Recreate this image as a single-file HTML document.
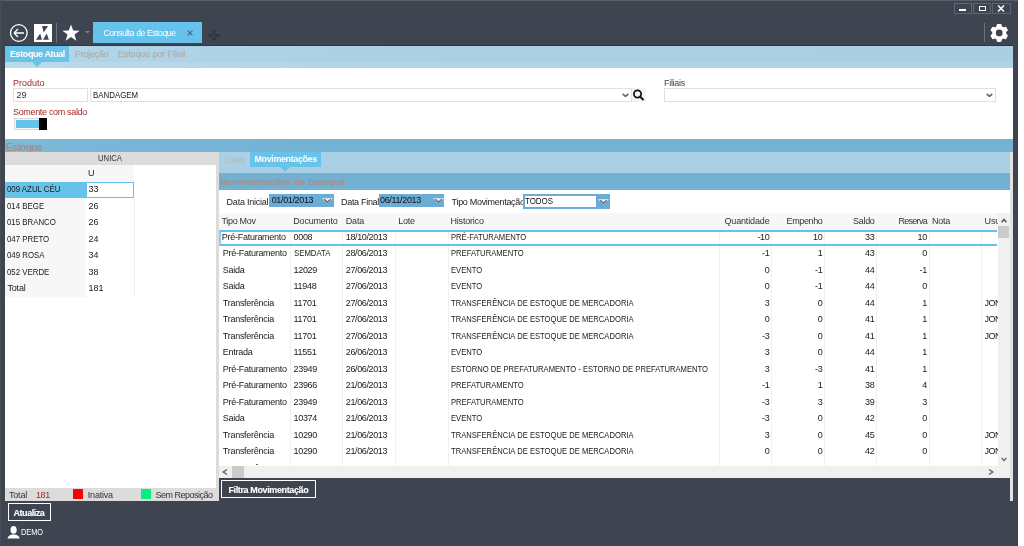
<!DOCTYPE html>
<html><head><meta charset="utf-8">
<style>
*{margin:0;padding:0;box-sizing:border-box}
html,body{width:1024px;height:546px;overflow:hidden;background:#fff;font-family:"Liberation Sans",sans-serif;font-size:9px;color:#1a1a1a}
.a{position:absolute}
.t{position:absolute;white-space:nowrap;line-height:9px}
#frame{left:0;top:0;width:1018px;height:546px;background:#3e4550}
#tabbar{left:5px;top:46px;width:1008px;height:22px;background:linear-gradient(90deg,#b2d6e8,#a9d0e4 40%,#a8cfe3)}
#content{left:5px;top:68px;width:1008px;height:71px;background:#fff}
.inp{position:absolute;border:1px solid #e0e0e0;background:#fff}
.red{color:#a52a2a}
#estbar{left:5px;top:139px;width:1008px;height:12.5px;background:linear-gradient(90deg,#80bad9,#79b5d6 12%,#74b2d4 30%,#74b2d4)}
#leftp{left:5px;top:151.5px;width:214px;height:349.5px;background:#dcdcdc}
#rightp{left:219px;top:151.5px;width:791px;height:314px;background:#fff}
#rstrip{left:1010px;top:151.5px;width:3px;height:349.5px;background:#e2e2e2}
.vl{position:absolute;top:230px;width:1px;height:235.6px;background:#f0f0f0}
.row .t{top:0}
.u{transform:scaleX(0.85);transform-origin:0 0}
.ur{transform:scaleX(0.85);transform-origin:100% 0}
</style></head><body><div id="root" style="position:absolute;left:0;top:0;width:1024px;height:546px;will-change:transform">
<div id="frame" class="a"></div>
<div class="a" style="left:0;top:0;width:1018px;height:1px;background:#5b5f66"></div>
<div class="a" style="left:0;top:0;width:1.2px;height:546px;background:#484d55"></div>

<!-- title bar icons -->
<svg class="a" style="left:8px;top:22px" width="22" height="22" viewBox="0 0 22 22">
 <circle cx="10.8" cy="11" r="8.3" fill="none" stroke="#fff" stroke-width="1.3"/>
 <path d="M6 11 H16 M6 11 L10 7 M6 11 L10 15" stroke="#fff" stroke-width="1.4" fill="none"/>
</svg>
<div class="a" style="left:34px;top:24px;width:18px;height:18px;background:#fff"></div>
<svg class="a" style="left:34px;top:24px" width="18" height="18" viewBox="0 0 18 18">
 <path d="M8.1 2 L14.1 2 L9.6 8.5 Z" fill="#3e4550"/>
 <path d="M2 15.7 L7.9 15.7 L6.2 9.4 Z" fill="#3e4550"/>
 <path d="M9.1 15.7 L14.9 15.7 L12.7 9.4 Z" fill="#3e4550"/>
</svg>
<div class="a" style="left:56px;top:23px;width:1px;height:19.5px;background:#6c727b"></div>
<svg class="a" style="left:61.5px;top:24px" width="18" height="18" viewBox="0 0 18 18">
 <path d="M9 0.5 L11.2 6.6 L17.6 6.7 L12.5 10.6 L14.3 16.8 L9 13.1 L3.7 16.8 L5.5 10.6 L0.4 6.7 L6.8 6.6 Z" fill="#fff"/>
</svg>
<svg class="a" style="left:84.5px;top:31px" width="5" height="3" viewBox="0 0 5 3"><path d="M0 0 H5 L2.5 2.5 Z" fill="#7a8089"/></svg>
<div class="a" style="left:93px;top:22.4px;width:109px;height:20.8px;background:#66c2ea"></div>
<div class="t" style="left:103.5px;top:29px;color:#fff;font-size:8.7px;letter-spacing:-0.45px">Consulta de Estoque</div>
<svg class="a" style="left:187px;top:29.8px" width="6" height="6" viewBox="0 0 6 6"><path d="M0.6 0.6 L5.4 5.4 M5.4 0.6 L0.6 5.4" stroke="#3b6580" stroke-width="1.1"/></svg>
<svg class="a" style="left:207.5px;top:30px" width="12" height="12" viewBox="0 0 12 12"><path d="M6 1.6 V9.6 M1.6 5.6 H10.4" stroke="#2d3540" stroke-width="3" stroke-linecap="round"/><path d="M6 2 V8 M2.5 5.6 H8" stroke="#3f4a57" stroke-width="0.8"/></svg>

<!-- window buttons -->
<div class="a" style="left:954px;top:3px;width:18px;height:11px;border:1px solid #56687b"></div>
<div class="a" style="left:973px;top:3px;width:18px;height:11px;border:1px solid #56687b"></div>
<div class="a" style="left:992px;top:3px;width:19px;height:11px;border:1px solid #56687b"></div>
<div class="a" style="left:959px;top:9px;width:7px;height:2px;background:#fff"></div>
<div class="a" style="left:978.5px;top:5.5px;width:7px;height:5px;border:1.5px solid #fff"></div>
<svg class="a" style="left:997px;top:5px" width="8" height="7" viewBox="0 0 8 7"><path d="M1 0.5 L7 6.5 M7 0.5 L1 6.5" stroke="#fff" stroke-width="1.5"/></svg>
<div class="a" style="left:984px;top:23px;width:1px;height:19px;background:#6c727b"></div>
<svg class="a" style="left:990px;top:24px" width="18" height="18" viewBox="0 0 18 18">
 <g fill="#fff" transform="translate(9.2 8.9)">
  <circle r="7.1"/>
  <rect x="-2.5" y="-9" width="5" height="5" rx="1.3"/>
  <rect x="-2.5" y="-9" width="5" height="5" rx="1.3" transform="rotate(60)"/>
  <rect x="-2.5" y="-9" width="5" height="5" rx="1.3" transform="rotate(120)"/>
  <rect x="-2.5" y="-9" width="5" height="5" rx="1.3" transform="rotate(180)"/>
  <rect x="-2.5" y="-9" width="5" height="5" rx="1.3" transform="rotate(240)"/>
  <rect x="-2.5" y="-9" width="5" height="5" rx="1.3" transform="rotate(300)"/>
  <circle r="3.4" fill="#3e4550"/>
 </g>
</svg>

<!-- tab bar -->
<div class="a" style="left:5px;top:45px;width:1008px;height:1.2px;background:#30363e"></div>
<div id="tabbar" class="a"></div>
<div class="a" style="left:5px;top:62px;width:1008px;height:5.6px;background:rgba(255,255,255,0.1)"></div>
<div class="a" style="left:5px;top:46px;width:64px;height:16px;background:#68c3ea"></div>
<svg class="a" style="left:32.4px;top:62px" width="10" height="5" viewBox="0 0 10 5"><path d="M0 0 H10 L5 4.9 Z" fill="#68c3ea"/></svg>
<div class="t" style="left:10px;top:50.2px;color:#fff;font-weight:bold;letter-spacing:-0.4px">Estoque Atual</div>
<div class="t" style="left:75px;top:50.2px;color:#b0b0b0;letter-spacing:-0.25px;-webkit-text-stroke:0.25px #b0b0b0">Projeção</div>
<div class="t" style="left:118px;top:50.2px;color:#b0b0b0;letter-spacing:-0.13px;-webkit-text-stroke:0.25px #b0b0b0">Estoque por Filial</div>

<!-- content -->
<div id="content" class="a"></div>
<div class="t red" style="left:13px;top:78.8px;letter-spacing:0">Produto</div>
<div class="inp" style="left:13px;top:88px;width:75px;height:14px"></div>
<div class="t" style="left:16.5px;top:91px;color:#333">29</div>
<div class="inp" style="left:90px;top:88px;width:541.5px;height:14px"></div>
<div class="t u" style="left:92.5px;top:91.3px;transform:scaleX(0.875)">BANDAGEM</div>
<svg class="a" style="left:621.8px;top:92.6px" width="7" height="4.5" viewBox="0 0 7 4.5"><path d="M0.7 0.8 L3.5 3.5 L6.3 0.8" stroke="#666" stroke-width="1.6" fill="none"/></svg>
<div class="a" style="left:631.5px;top:88px;width:14px;height:14px;background:#f4f4f4"></div>
<svg class="a" style="left:632px;top:88.8px" width="13" height="13" viewBox="0 0 13 13"><circle cx="5.5" cy="5" r="3.6" fill="none" stroke="#111" stroke-width="1.7"/><path d="M8 7.5 L11.5 11" stroke="#111" stroke-width="2"/></svg>
<div class="t" style="left:664px;top:78.8px;color:#444;letter-spacing:-0.3px">Filiais</div>
<div class="inp" style="left:663.5px;top:88px;width:332.3px;height:14px"></div>
<svg class="a" style="left:985.6px;top:92.6px" width="7" height="4.5" viewBox="0 0 7 4.5"><path d="M0.7 0.8 L3.5 3.5 L6.3 0.8" stroke="#666" stroke-width="1.6" fill="none"/></svg>
<div class="t red" style="left:13px;top:108px;letter-spacing:-0.33px">Somente com saldo</div>
<div class="a" style="left:13.8px;top:118.1px;width:33.2px;height:12.2px;background:#f4f6f7;border:1.2px solid #d9d9d9"></div>
<div class="a" style="left:15.8px;top:119.9px;width:23.6px;height:8.3px;background:#68c3ea"></div>
<div class="a" style="left:39.2px;top:118.1px;width:7.8px;height:12.2px;background:#000"></div>

<!-- estoque bar -->
<div id="estbar" class="a"></div>
<div class="a" style="left:5px;top:139px;width:100px;height:12.5px;overflow:hidden"><div class="t" style="left:0.8px;top:3.5px;color:#9c9390;font-weight:bold;font-size:10px;letter-spacing:-0.45px;-webkit-text-stroke:0.15px #9c9390">Estoque</div></div>

<!-- left panel -->
<div id="leftp" class="a"></div>
<div class="a" style="left:5px;top:165px;width:210.5px;height:322.5px;background:#fff"></div>
<div class="t u" style="left:97.5px;top:153.5px;color:#333;transform:scaleX(0.857)">UNICA</div>
<div class="a" style="left:5px;top:165px;width:129px;height:16.5px;background:#f7f7f7"></div>
<div class="t" style="left:88px;top:168.5px">U</div>
<div class="a" style="left:5px;top:181.5px;width:81px;height:16.5px;background:#68c3ea"></div>
<div class="a" style="left:86px;top:181.5px;width:48px;height:16.5px;border:1.5px solid #66c1ea;background:#fff"></div>
<div class="a" style="left:5px;top:198px;width:81px;height:99px;background:#f7f7f7"></div>
<div class="a" style="left:133.5px;top:198px;width:1px;height:98.5px;background:#f0f0f0"></div>
<div class="t" style="left:6.5px;top:185px;transform:scaleX(0.873);transform-origin:0 0">009 AZUL CÉU</div><div class="t" style="left:88.5px;top:185px">33</div>
<div class="t" style="left:6.5px;top:201.5px;transform:scaleX(0.873);transform-origin:0 0">014 BEGE</div><div class="t" style="left:88.5px;top:201.5px">26</div>
<div class="t" style="left:6.5px;top:218px;transform:scaleX(0.873);transform-origin:0 0">015 BRANCO</div><div class="t" style="left:88.5px;top:218px">26</div>
<div class="t" style="left:6.5px;top:234.5px;transform:scaleX(0.873);transform-origin:0 0">047 PRETO</div><div class="t" style="left:88.5px;top:234.5px">24</div>
<div class="t" style="left:6.5px;top:251px;transform:scaleX(0.873);transform-origin:0 0">049 ROSA</div><div class="t" style="left:88.5px;top:251px">34</div>
<div class="t" style="left:6.5px;top:267.5px;transform:scaleX(0.873);transform-origin:0 0">052 VERDE</div><div class="t" style="left:88.5px;top:267.5px">38</div>
<div class="t" style="left:7.5px;top:284px;letter-spacing:-0.2px">Total</div><div class="t" style="left:88.5px;top:284px">181</div>
<!-- status -->
<div class="t" style="left:9px;top:490.5px;color:#333;letter-spacing:-0.2px">Total</div>
<div class="t" style="left:36px;top:490.5px;color:#a52a2a;letter-spacing:-0.4px">181</div>
<div class="a" style="left:73.3px;top:489.4px;width:9.7px;height:9.7px;background:#ff0000"></div>
<div class="t" style="left:87.8px;top:490.5px;color:#333;letter-spacing:-0.2px">Inativa</div>
<div class="a" style="left:140.8px;top:489.4px;width:9.8px;height:9.7px;background:#00f080"></div>
<div class="t" style="left:155.6px;top:490.5px;color:#333;letter-spacing:-0.5px">Sem Reposição</div>

<div id="rstrip" class="a"></div>

<!-- right panel -->
<div id="rightp" class="a"></div>
<div class="a" style="left:219px;top:151.5px;width:791px;height:21.5px;background:#a9d0e4"></div>
<div class="t" style="left:224.3px;top:155.5px;color:#b5babd;letter-spacing:-0.3px">Lotes</div>
<div class="a" style="left:250.3px;top:152px;width:70.7px;height:15px;background:#68c3ea"></div>
<svg class="a" style="left:280.4px;top:167px" width="10" height="5" viewBox="0 0 10 5"><path d="M0 0 H10 L5 4.7 Z" fill="#68c3ea"/></svg>
<div class="t" style="left:254.5px;top:155px;color:#fff;font-weight:bold;letter-spacing:-0.4px">Movimentações</div>
<div class="a" style="left:219px;top:173px;width:791px;height:17.3px;background:#72b0d4"></div>
<div class="t" style="left:219.8px;top:176.5px;color:#9c9592;font-weight:bold;font-size:9.5px;letter-spacing:0px;-webkit-text-stroke:0.15px #9c9592">Movimentações de Estoque</div>

<div class="t" style="left:226.6px;top:197.7px;letter-spacing:-0.23px">Data Inicial</div>
<div class="a" style="left:269px;top:194.2px;width:64.7px;height:12.6px;background:#6aacd6"></div>
<div class="t" style="left:271.7px;top:195.5px;color:#111;letter-spacing:-0.35px">01/01/2013</div>
<svg class="a" style="left:322px;top:197.8px" width="11" height="6" viewBox="0 0 11 6"><path d="M0 0.2 L11 0.2 L5.5 5.6 Z" fill="#e9f2f7"/><path d="M2.2 1.3 L5.5 4.3 L8.8 1.3" stroke="#6a6a6a" stroke-width="1.4" fill="none"/></svg>
<div class="t" style="left:341px;top:197.7px;letter-spacing:-0.3px">Data Final</div>
<div class="a" style="left:379px;top:194.2px;width:65px;height:12.6px;background:#6aacd6"></div>
<div class="t" style="left:380px;top:195.5px;color:#111;letter-spacing:-0.35px">06/11/2013</div>
<svg class="a" style="left:432.5px;top:197.8px" width="11" height="6" viewBox="0 0 11 6"><path d="M0 0.2 L11 0.2 L5.5 5.6 Z" fill="#e9f2f7"/><path d="M2.2 1.3 L5.5 4.3 L8.8 1.3" stroke="#6a6a6a" stroke-width="1.4" fill="none"/></svg>
<div class="a" style="left:451.6px;top:190px;width:71.4px;height:20px;overflow:hidden"><div class="t" style="left:0;top:7.7px;letter-spacing:-0.3px">Tipo Movimentação</div></div>
<div class="a" style="left:523px;top:194.2px;width:86.5px;height:14.5px;background:#6aacd6"></div>
<div class="a" style="left:524.5px;top:195.7px;width:71.5px;height:11.5px;background:#fff"></div>
<div class="t u" style="left:524.5px;top:197px;color:#111;transform:scaleX(0.88)">TODOS</div>
<svg class="a" style="left:597.5px;top:198.5px" width="11" height="6" viewBox="0 0 11 6"><path d="M0 0.2 L11 0.2 L5.5 5.6 Z" fill="#e9f2f7"/><path d="M2.2 1.3 L5.5 4.3 L8.8 1.3" stroke="#6a6a6a" stroke-width="1.4" fill="none"/></svg>

<!-- table -->
<div class="a" style="left:219px;top:212.5px;width:779px;height:17.5px;background:#f7f7f7"></div>
<div class="vl" style="left:290.2px"></div><div class="vl" style="left:342.4px"></div><div class="vl" style="left:395.1px"></div><div class="vl" style="left:447.5px"></div><div class="vl" style="left:719.0px"></div><div class="vl" style="left:770.8px"></div><div class="vl" style="left:823.9px"></div><div class="vl" style="left:876.3px"></div><div class="vl" style="left:928.7px"></div><div class="vl" style="left:980.7px"></div>
<div class="t" style="left:221.4px;top:216.5px;letter-spacing:-0.3px;color:#333">Tipo Mov</div><div class="t" style="left:293.3px;top:216.5px;letter-spacing:-0.2px;color:#333">Documento</div><div class="t" style="left:345.8px;top:216.5px;letter-spacing:-0.2px;color:#333">Data</div><div class="t" style="left:398.2px;top:216.5px;letter-spacing:-0.2px;color:#333">Lote</div><div class="t" style="left:450.5px;top:216.5px;letter-spacing:-0.2px;color:#333">Historico</div><div class="t" style="right:254.5px;top:216.5px;letter-spacing:-0.15px;color:#333">Quantidade</div><div class="t" style="right:201.5px;top:216.5px;letter-spacing:-0.36px;color:#333">Empenho</div><div class="t" style="right:149.5px;top:216.5px;letter-spacing:-0.32px;color:#333">Saldo</div><div class="t" style="right:97.0px;top:216.5px;letter-spacing:-0.7px;color:#333">Reserva</div><div class="t" style="left:932px;top:216.5px;letter-spacing:-0.25px;color:#333">Nota</div><div class="t" style="left:984.6px;top:216.5px;letter-spacing:-0.2px;color:#333">Usu</div>
<div class="a" style="left:219px;top:230px;width:779px;height:235.6px;overflow:hidden"><div class="a" style="left:-219px;top:-230px;width:1024px;height:546px"><div class="a" style="left:219px;top:230.2px;width:778px;height:15.6px;border-top:2px solid #66c1ea;border-bottom:2px solid #66c1ea;border-left:2px solid #8fd0ee"></div><div class="t" style="left:221.8px;top:232.8px;letter-spacing:-0.27px;color:#1a1a1a">Pré-Faturamento</div><div class="t" style="left:293.5px;top:232.8px;letter-spacing:-0.3px;color:#1a1a1a">0008</div><div class="t" style="left:345.8px;top:232.8px;letter-spacing:-0.38px;color:#1a1a1a">18/10/2013</div><div class="t" style="left:450.7px;top:232.8px;letter-spacing:0px;color:#1a1a1a;transform:scaleX(0.848);transform-origin:0 0">PRÉ-FATURAMENTO</div><div class="t" style="right:254.5px;top:232.8px;letter-spacing:-0.3px;color:#1a1a1a">-10</div><div class="t" style="right:201.5px;top:232.8px;letter-spacing:-0.3px;color:#1a1a1a">10</div><div class="t" style="right:149.5px;top:232.8px;letter-spacing:-0.3px;color:#1a1a1a">33</div><div class="t" style="right:97.0px;top:232.8px;letter-spacing:-0.3px;color:#1a1a1a">10</div><div class="t" style="left:222.8px;top:249.3px;letter-spacing:-0.27px;color:#1a1a1a">Pré-Faturamento</div><div class="t" style="left:293.5px;top:249.3px;letter-spacing:0px;color:#1a1a1a;transform:scaleX(0.865);transform-origin:0 0">SEMDATA</div><div class="t" style="left:345.8px;top:249.3px;letter-spacing:-0.38px;color:#1a1a1a">28/06/2013</div><div class="t" style="left:450.7px;top:249.3px;letter-spacing:0px;color:#1a1a1a;transform:scaleX(0.848);transform-origin:0 0">PREFATURAMENTO</div><div class="t" style="right:254.5px;top:249.3px;letter-spacing:-0.3px;color:#1a1a1a">-1</div><div class="t" style="right:201.5px;top:249.3px;letter-spacing:-0.3px;color:#1a1a1a">1</div><div class="t" style="right:149.5px;top:249.3px;letter-spacing:-0.3px;color:#1a1a1a">43</div><div class="t" style="right:97.0px;top:249.3px;letter-spacing:-0.3px;color:#1a1a1a">0</div><div class="t" style="left:222.8px;top:265.8px;letter-spacing:-0.27px;color:#1a1a1a">Saida</div><div class="t" style="left:293.5px;top:265.8px;letter-spacing:-0.3px;color:#1a1a1a">12029</div><div class="t" style="left:345.8px;top:265.8px;letter-spacing:-0.38px;color:#1a1a1a">27/06/2013</div><div class="t" style="left:450.7px;top:265.8px;letter-spacing:0px;color:#1a1a1a;transform:scaleX(0.848);transform-origin:0 0">EVENTO</div><div class="t" style="right:254.5px;top:265.8px;letter-spacing:-0.3px;color:#1a1a1a">0</div><div class="t" style="right:201.5px;top:265.8px;letter-spacing:-0.3px;color:#1a1a1a">-1</div><div class="t" style="right:149.5px;top:265.8px;letter-spacing:-0.3px;color:#1a1a1a">44</div><div class="t" style="right:97.0px;top:265.8px;letter-spacing:-0.3px;color:#1a1a1a">-1</div><div class="t" style="left:222.8px;top:282.3px;letter-spacing:-0.27px;color:#1a1a1a">Saida</div><div class="t" style="left:293.5px;top:282.3px;letter-spacing:-0.3px;color:#1a1a1a">11948</div><div class="t" style="left:345.8px;top:282.3px;letter-spacing:-0.38px;color:#1a1a1a">27/06/2013</div><div class="t" style="left:450.7px;top:282.3px;letter-spacing:0px;color:#1a1a1a;transform:scaleX(0.848);transform-origin:0 0">EVENTO</div><div class="t" style="right:254.5px;top:282.3px;letter-spacing:-0.3px;color:#1a1a1a">0</div><div class="t" style="right:201.5px;top:282.3px;letter-spacing:-0.3px;color:#1a1a1a">-1</div><div class="t" style="right:149.5px;top:282.3px;letter-spacing:-0.3px;color:#1a1a1a">44</div><div class="t" style="right:97.0px;top:282.3px;letter-spacing:-0.3px;color:#1a1a1a">0</div><div class="t" style="left:222.8px;top:298.8px;letter-spacing:-0.27px;color:#1a1a1a">Transferência</div><div class="t" style="left:293.5px;top:298.8px;letter-spacing:-0.3px;color:#1a1a1a">11701</div><div class="t" style="left:345.8px;top:298.8px;letter-spacing:-0.38px;color:#1a1a1a">27/06/2013</div><div class="t" style="left:450.7px;top:298.8px;letter-spacing:0px;color:#1a1a1a;transform:scaleX(0.848);transform-origin:0 0">TRANSFERÊNCIA DE ESTOQUE DE MERCADORIA</div><div class="t" style="right:254.5px;top:298.8px;letter-spacing:-0.3px;color:#1a1a1a">3</div><div class="t" style="right:201.5px;top:298.8px;letter-spacing:-0.3px;color:#1a1a1a">0</div><div class="t" style="right:149.5px;top:298.8px;letter-spacing:-0.3px;color:#1a1a1a">44</div><div class="t" style="right:97.0px;top:298.8px;letter-spacing:-0.3px;color:#1a1a1a">1</div><div class="a" style="left:984.6px;top:298.8px;width:13px;height:11px;overflow:hidden"><div class="t" style="left:0;top:0;letter-spacing:-0.5px">JON</div></div><div class="t" style="left:222.8px;top:315.3px;letter-spacing:-0.27px;color:#1a1a1a">Transferência</div><div class="t" style="left:293.5px;top:315.3px;letter-spacing:-0.3px;color:#1a1a1a">11701</div><div class="t" style="left:345.8px;top:315.3px;letter-spacing:-0.38px;color:#1a1a1a">27/06/2013</div><div class="t" style="left:450.7px;top:315.3px;letter-spacing:0px;color:#1a1a1a;transform:scaleX(0.848);transform-origin:0 0">TRANSFERÊNCIA DE ESTOQUE DE MERCADORIA</div><div class="t" style="right:254.5px;top:315.3px;letter-spacing:-0.3px;color:#1a1a1a">0</div><div class="t" style="right:201.5px;top:315.3px;letter-spacing:-0.3px;color:#1a1a1a">0</div><div class="t" style="right:149.5px;top:315.3px;letter-spacing:-0.3px;color:#1a1a1a">41</div><div class="t" style="right:97.0px;top:315.3px;letter-spacing:-0.3px;color:#1a1a1a">1</div><div class="a" style="left:984.6px;top:315.3px;width:13px;height:11px;overflow:hidden"><div class="t" style="left:0;top:0;letter-spacing:-0.5px">JON</div></div><div class="t" style="left:222.8px;top:331.8px;letter-spacing:-0.27px;color:#1a1a1a">Transferência</div><div class="t" style="left:293.5px;top:331.8px;letter-spacing:-0.3px;color:#1a1a1a">11701</div><div class="t" style="left:345.8px;top:331.8px;letter-spacing:-0.38px;color:#1a1a1a">27/06/2013</div><div class="t" style="left:450.7px;top:331.8px;letter-spacing:0px;color:#1a1a1a;transform:scaleX(0.848);transform-origin:0 0">TRANSFERÊNCIA DE ESTOQUE DE MERCADORIA</div><div class="t" style="right:254.5px;top:331.8px;letter-spacing:-0.3px;color:#1a1a1a">-3</div><div class="t" style="right:201.5px;top:331.8px;letter-spacing:-0.3px;color:#1a1a1a">0</div><div class="t" style="right:149.5px;top:331.8px;letter-spacing:-0.3px;color:#1a1a1a">41</div><div class="t" style="right:97.0px;top:331.8px;letter-spacing:-0.3px;color:#1a1a1a">1</div><div class="a" style="left:984.6px;top:331.8px;width:13px;height:11px;overflow:hidden"><div class="t" style="left:0;top:0;letter-spacing:-0.5px">JON</div></div><div class="t" style="left:222.8px;top:348.3px;letter-spacing:-0.27px;color:#1a1a1a">Entrada</div><div class="t" style="left:293.5px;top:348.3px;letter-spacing:-0.3px;color:#1a1a1a">11551</div><div class="t" style="left:345.8px;top:348.3px;letter-spacing:-0.38px;color:#1a1a1a">26/06/2013</div><div class="t" style="left:450.7px;top:348.3px;letter-spacing:0px;color:#1a1a1a;transform:scaleX(0.848);transform-origin:0 0">EVENTO</div><div class="t" style="right:254.5px;top:348.3px;letter-spacing:-0.3px;color:#1a1a1a">3</div><div class="t" style="right:201.5px;top:348.3px;letter-spacing:-0.3px;color:#1a1a1a">0</div><div class="t" style="right:149.5px;top:348.3px;letter-spacing:-0.3px;color:#1a1a1a">44</div><div class="t" style="right:97.0px;top:348.3px;letter-spacing:-0.3px;color:#1a1a1a">1</div><div class="t" style="left:222.8px;top:364.8px;letter-spacing:-0.27px;color:#1a1a1a">Pré-Faturamento</div><div class="t" style="left:293.5px;top:364.8px;letter-spacing:-0.3px;color:#1a1a1a">23949</div><div class="t" style="left:345.8px;top:364.8px;letter-spacing:-0.38px;color:#1a1a1a">26/06/2013</div><div class="t" style="left:450.7px;top:364.8px;letter-spacing:0px;color:#1a1a1a;transform:scaleX(0.848);transform-origin:0 0">ESTORNO DE PREFATURAMENTO - ESTORNO DE PREFATURAMENTO</div><div class="t" style="right:254.5px;top:364.8px;letter-spacing:-0.3px;color:#1a1a1a">3</div><div class="t" style="right:201.5px;top:364.8px;letter-spacing:-0.3px;color:#1a1a1a">-3</div><div class="t" style="right:149.5px;top:364.8px;letter-spacing:-0.3px;color:#1a1a1a">41</div><div class="t" style="right:97.0px;top:364.8px;letter-spacing:-0.3px;color:#1a1a1a">1</div><div class="t" style="left:222.8px;top:381.3px;letter-spacing:-0.27px;color:#1a1a1a">Pré-Faturamento</div><div class="t" style="left:293.5px;top:381.3px;letter-spacing:-0.3px;color:#1a1a1a">23966</div><div class="t" style="left:345.8px;top:381.3px;letter-spacing:-0.38px;color:#1a1a1a">21/06/2013</div><div class="t" style="left:450.7px;top:381.3px;letter-spacing:0px;color:#1a1a1a;transform:scaleX(0.848);transform-origin:0 0">PREFATURAMENTO</div><div class="t" style="right:254.5px;top:381.3px;letter-spacing:-0.3px;color:#1a1a1a">-1</div><div class="t" style="right:201.5px;top:381.3px;letter-spacing:-0.3px;color:#1a1a1a">1</div><div class="t" style="right:149.5px;top:381.3px;letter-spacing:-0.3px;color:#1a1a1a">38</div><div class="t" style="right:97.0px;top:381.3px;letter-spacing:-0.3px;color:#1a1a1a">4</div><div class="t" style="left:222.8px;top:397.8px;letter-spacing:-0.27px;color:#1a1a1a">Pré-Faturamento</div><div class="t" style="left:293.5px;top:397.8px;letter-spacing:-0.3px;color:#1a1a1a">23949</div><div class="t" style="left:345.8px;top:397.8px;letter-spacing:-0.38px;color:#1a1a1a">21/06/2013</div><div class="t" style="left:450.7px;top:397.8px;letter-spacing:0px;color:#1a1a1a;transform:scaleX(0.848);transform-origin:0 0">PREFATURAMENTO</div><div class="t" style="right:254.5px;top:397.8px;letter-spacing:-0.3px;color:#1a1a1a">-3</div><div class="t" style="right:201.5px;top:397.8px;letter-spacing:-0.3px;color:#1a1a1a">3</div><div class="t" style="right:149.5px;top:397.8px;letter-spacing:-0.3px;color:#1a1a1a">39</div><div class="t" style="right:97.0px;top:397.8px;letter-spacing:-0.3px;color:#1a1a1a">3</div><div class="t" style="left:222.8px;top:414.3px;letter-spacing:-0.27px;color:#1a1a1a">Saida</div><div class="t" style="left:293.5px;top:414.3px;letter-spacing:-0.3px;color:#1a1a1a">10374</div><div class="t" style="left:345.8px;top:414.3px;letter-spacing:-0.38px;color:#1a1a1a">21/06/2013</div><div class="t" style="left:450.7px;top:414.3px;letter-spacing:0px;color:#1a1a1a;transform:scaleX(0.848);transform-origin:0 0">EVENTO</div><div class="t" style="right:254.5px;top:414.3px;letter-spacing:-0.3px;color:#1a1a1a">-3</div><div class="t" style="right:201.5px;top:414.3px;letter-spacing:-0.3px;color:#1a1a1a">0</div><div class="t" style="right:149.5px;top:414.3px;letter-spacing:-0.3px;color:#1a1a1a">42</div><div class="t" style="right:97.0px;top:414.3px;letter-spacing:-0.3px;color:#1a1a1a">0</div><div class="t" style="left:222.8px;top:430.8px;letter-spacing:-0.27px;color:#1a1a1a">Transferência</div><div class="t" style="left:293.5px;top:430.8px;letter-spacing:-0.3px;color:#1a1a1a">10290</div><div class="t" style="left:345.8px;top:430.8px;letter-spacing:-0.38px;color:#1a1a1a">21/06/2013</div><div class="t" style="left:450.7px;top:430.8px;letter-spacing:0px;color:#1a1a1a;transform:scaleX(0.848);transform-origin:0 0">TRANSFERÊNCIA DE ESTOQUE DE MERCADORIA</div><div class="t" style="right:254.5px;top:430.8px;letter-spacing:-0.3px;color:#1a1a1a">3</div><div class="t" style="right:201.5px;top:430.8px;letter-spacing:-0.3px;color:#1a1a1a">0</div><div class="t" style="right:149.5px;top:430.8px;letter-spacing:-0.3px;color:#1a1a1a">45</div><div class="t" style="right:97.0px;top:430.8px;letter-spacing:-0.3px;color:#1a1a1a">0</div><div class="a" style="left:984.6px;top:430.8px;width:13px;height:11px;overflow:hidden"><div class="t" style="left:0;top:0;letter-spacing:-0.5px">JON</div></div><div class="t" style="left:222.8px;top:447.3px;letter-spacing:-0.27px;color:#1a1a1a">Transferência</div><div class="t" style="left:293.5px;top:447.3px;letter-spacing:-0.3px;color:#1a1a1a">10290</div><div class="t" style="left:345.8px;top:447.3px;letter-spacing:-0.38px;color:#1a1a1a">21/06/2013</div><div class="t" style="left:450.7px;top:447.3px;letter-spacing:0px;color:#1a1a1a;transform:scaleX(0.848);transform-origin:0 0">TRANSFERÊNCIA DE ESTOQUE DE MERCADORIA</div><div class="t" style="right:254.5px;top:447.3px;letter-spacing:-0.3px;color:#1a1a1a">0</div><div class="t" style="right:201.5px;top:447.3px;letter-spacing:-0.3px;color:#1a1a1a">0</div><div class="t" style="right:149.5px;top:447.3px;letter-spacing:-0.3px;color:#1a1a1a">42</div><div class="t" style="right:97.0px;top:447.3px;letter-spacing:-0.3px;color:#1a1a1a">0</div><div class="a" style="left:984.6px;top:447.3px;width:13px;height:11px;overflow:hidden"><div class="t" style="left:0;top:0;letter-spacing:-0.5px">JON</div></div><div class="a" style="left:255.5px;top:464px;width:2.5px;height:0.8px;background:#666"></div></div></div>

<!-- scrollbars -->
<div class="a" style="left:998px;top:212.5px;width:12px;height:253px;background:#f0f0f0"></div>
<div class="a" style="left:998.3px;top:225.8px;width:10.5px;height:12px;background:#cacaca"></div>
<svg class="a" style="left:1000.8px;top:217.5px" width="6" height="5" viewBox="0 0 6 5"><path d="M0.6 4.2 L3 1.4 L5.4 4.2" stroke="#555" stroke-width="1.5" fill="none"/></svg>
<svg class="a" style="left:1000.8px;top:456.8px" width="6" height="5" viewBox="0 0 6 5"><path d="M0.6 0.8 L3 3.6 L5.4 0.8" stroke="#555" stroke-width="1.2" fill="none"/></svg>
<div class="a" style="left:219px;top:465.6px;width:779px;height:12px;background:#f0f0f0"></div>
<div class="a" style="left:232px;top:465.6px;width:12px;height:12px;background:#cacaca"></div>
<svg class="a" style="left:222px;top:468.5px" width="6" height="6" viewBox="0 0 6 6"><path d="M5 0.5 L1.2 3 L5 5.5" stroke="#555" stroke-width="1.2" fill="none"/></svg>
<svg class="a" style="left:988px;top:468.5px" width="6" height="6" viewBox="0 0 6 6"><path d="M1 0.5 L4.8 3 L1 5.5" stroke="#555" stroke-width="1.2" fill="none"/></svg>
<div class="a" style="left:998px;top:465.6px;width:12px;height:12px;background:#f0f0f0"></div>
<div class="a" style="left:219px;top:477.5px;width:791px;height:23.5px;background:#3e4550"></div>

<!-- buttons -->
<div class="a" style="left:221.3px;top:480.2px;width:95px;height:17.6px;border:1.8px solid #fff"></div>
<div class="t" style="left:228.4px;top:485.8px;color:#fff;font-weight:bold;letter-spacing:-0.37px;-webkit-text-stroke:0.1px #fff">Filtra Movimentação</div>
<div class="a" style="left:7.5px;top:503.4px;width:43.4px;height:17.5px;border:1.8px solid #fff"></div>
<div class="t" style="left:13.5px;top:509px;color:#fff;font-weight:bold;letter-spacing:-0.45px;-webkit-text-stroke:0.1px #fff">Atualiza</div>
<svg class="a" style="left:7px;top:526px" width="13" height="13" viewBox="0 0 13 13"><ellipse cx="6.6" cy="3.9" rx="3.1" ry="3.8" fill="#fff"/><path d="M0.5 12.6 C0.8 10.2 3 9.3 5 8.6 L8.2 8.6 C10.2 9.3 12.4 10.2 12.8 12.6 Z" fill="#fff"/></svg>
<div class="t u" style="left:21px;top:528px;color:#fff;transform:scaleX(0.815)">DEMO</div>
</div></body></html>
